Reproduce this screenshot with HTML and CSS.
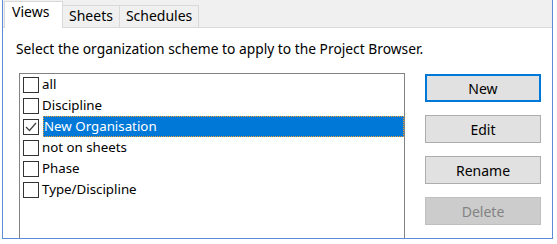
FILE: index.html
```html
<!DOCTYPE html>
<html lang="en">
<head>
    <meta charset="UTF-8">
    <title>Browser Organization</title>
    <link rel="stylesheet" href="styles.css">
</head>
<body>

    <div class="frame">
        <div class="tab-bar">
            <div class="tab active">Views</div>
            <div class="tab">Sheets</div>
            <div class="tab">Schedules</div>
        </div>
        <div class="tab-page">
            <p class="hint">Select the organization scheme to apply to the Project Browser.</p>
            <div class="page-row">
                <div class="list-box">
                    <div class="list-item">
                        <span class="check"></span>
                        <span class="item-label">all</span>
                    </div>
                    <div class="list-item">
                        <span class="check"></span>
                        <span class="item-label">Discipline</span>
                    </div>
                    <div class="list-item">
                        <span class="check">
                            <svg width="14" height="14" viewBox="0 0 14 14"><polyline points="2,7 5.5,10.5 12,3" fill="none" stroke="#444" stroke-width="1.3"/></svg>
                        </span>
                        <span class="item-label selected">New Organisation</span>
                    </div>
                    <div class="list-item">
                        <span class="check"></span>
                        <span class="item-label">not on sheets</span>
                    </div>
                    <div class="list-item">
                        <span class="check"></span>
                        <span class="item-label">Phase</span>
                    </div>
                    <div class="list-item">
                        <span class="check"></span>
                        <span class="item-label">Type/Discipline</span>
                    </div>
                </div>
                <div class="buttons">
                    <button class="default">New</button>
                    <button>Edit</button>
                    <button>Rename</button>
                    <button disabled>Delete</button>
                </div>
            </div>
        </div>
    </div>

</body>
</html>
```

FILE: styles.css
```css
body {
    margin: 0;
    background: #ffffff;
    font-family: "Noto Sans", "Open Sans", sans-serif;
    font-size: 14px;
    color: #000000;
}
.frame {
    box-sizing: border-box;
    width: 551px;
    height: 239px;
    margin-left: 2px;
    border: 1px solid #5b8bd9;
    border-top: none;
    overflow: hidden;
}
.tab-bar {
    display: flex;
    align-items: flex-end;
    height: 28px;
    padding-left: 1px;
    background: #f0f0f0;
    border-bottom: 1px solid #d9d9d9;
    box-sizing: border-box;
}
.tab {
    box-sizing: border-box;
    height: 22px;
    padding: 0 6px;
    line-height: 20px;
    background: #f0f0f0;
    border: 1px solid #d9d9d9;
    border-bottom: none;
    margin-left: -1px;
}
.tab.active {
    height: 27px;
    margin-bottom: -1px;
    margin-left: 0;
    width: 59px;
    padding-left: 7px;
    line-height: 20px;
    background: #ffffff;
    z-index: 1;
}
.tab-page {
    padding: 12px 0 0 13px;
}
.hint {
    margin: 0;
    line-height: 18px;
    font-size: 13.8px;
}
.page-row {
    display: flex;
    margin-top: 15px;
}
.list-box {
    box-sizing: border-box;
    width: 386px;
    height: 180px;
    margin-left: 3px;
    border: 1px solid #828282;
    font-size: 13.3px;
}
.list-item {
    display: flex;
    align-items: center;
    height: 21px;
}
.check {
    box-sizing: border-box;
    width: 16px;
    height: 16px;
    margin-left: 3px;
    margin-right: 2px;
    border: 1px solid #333333;
    background: #ffffff;
    display: flex;
    align-items: center;
    justify-content: center;
}
.item-label {
    box-sizing: border-box;
    height: 21px;
    line-height: 18px;
    border: 1px solid transparent;
}
.item-label.selected {
    flex: 1;
    margin-left: 2px;
    background: #0078d7;
    color: #ffffff;
    border: 1px dotted #f0a030;
}
.buttons {
    display: flex;
    flex-direction: column;
    gap: 13px;
    margin-left: 20px;
    margin-top: 1px;
}
.buttons button {
    box-sizing: border-box;
    width: 116px;
    height: 28px;
    font-family: inherit;
    font-size: 14px;
    color: #000000;
    background: #e1e1e1;
    border: 1px solid #adadad;
    padding: 0;
}
.buttons button.default {
    border: 2px solid #0078d7;
}
.buttons button:disabled {
    background: #cccccc;
    border-color: #bfbfbf;
    color: #838383;
}
```
